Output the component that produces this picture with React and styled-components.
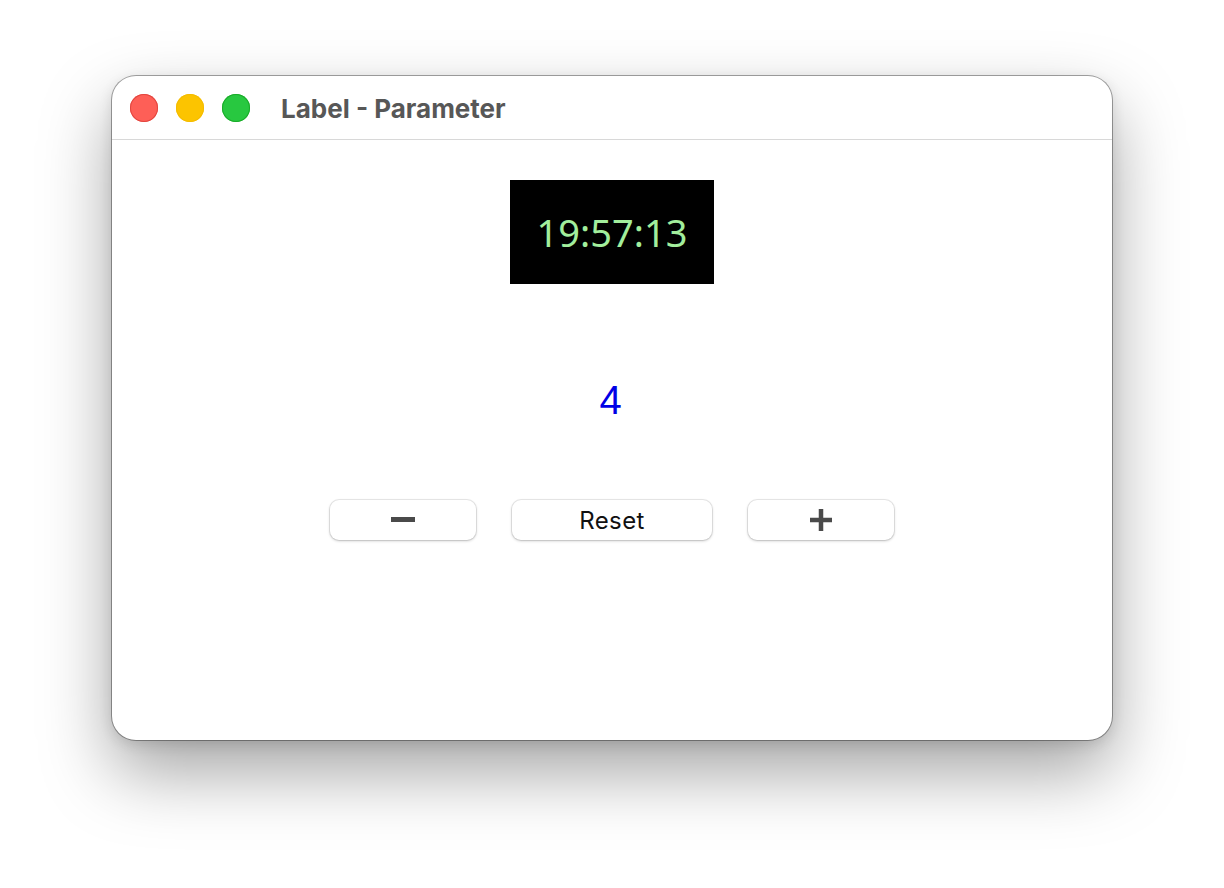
import React from "react";
import styled, { createGlobalStyle } from "styled-components";

const Global = createGlobalStyle`
  html, body { margin: 0; padding: 0; background: #ffffff; }
  body { width: 1224px; height: 888px; overflow: hidden; font-family: "Liberation Sans", Arial, sans-serif; }
`;

const Page = styled.div`
  width: 1224px;
  height: 888px;
  display: flex;
  align-items: flex-start;
  justify-content: center;
  padding-top: 76px;
  box-sizing: border-box;
`;

const Window = styled.div`
  width: 1000px;
  height: 664px;
  background: #fff;
  border-radius: 24px;
  box-shadow: 0 0 0 1px rgba(0, 0, 0, 0.34), 0 32px 70px rgba(0, 0, 0, 0.36), 0 4px 14px rgba(0, 0, 0, 0.12);
  display: flex;
  flex-direction: column;
  overflow: hidden;
`;

const TitleBar = styled.div`
  height: 63px;
  border-bottom: 1px solid #d8d8d8;
  display: flex;
  align-items: center;
  padding-left: 18px;
  flex-shrink: 0;
`;

const Lights = styled.div`
  display: flex;
  gap: 18px;
  margin-right: 31px;
`;

const Light = styled.div`
  width: 28px;
  height: 28px;
  border-radius: 50%;
  background: ${(p) => p.$bg};
  box-shadow: inset 0 0 0 1px ${(p) => p.$edge};
`;

const Title = styled.div`
  font-family: Inter, "Liberation Sans", sans-serif;
  font-weight: 700;
  font-size: 26px;
  color: #575757;
  margin-top: 2px;
`;

const Content = styled.div`
  flex: 1;
  display: flex;
  flex-direction: column;
  align-items: center;
  padding-top: 40px;
`;

const Clock = styled.div`
  width: 204px;
  height: 104px;
  background: #000;
  color: #a2ee9c;
  font-family: "Noto Sans", "Open Sans", sans-serif;
  font-size: 38px;
  display: flex;
  align-items: center;
  justify-content: center;
`;

const Counter = styled.div`
  margin-top: 86px;
  height: 60px;
  display: flex;
  align-items: center;
  justify-content: center;
  color: #0000e6;
  font-family: "Liberation Sans", Arial, sans-serif;
  font-size: 40px;
  padding-right: 3px;
`;

const Buttons = styled.div`
  margin-top: 70px;
  display: flex;
  gap: 36px;
`;

const Button = styled.button`
  width: ${(p) => p.$w}px;
  height: 40px;
  border: none;
  border-radius: 9px;
  background: #fff;
  box-shadow: 0 0 0 1px rgba(0, 0, 0, 0.08), 0 1px 3px rgba(0, 0, 0, 0.22);
  display: flex;
  align-items: center;
  justify-content: center;
  font-family: Inter, "Liberation Sans", sans-serif;
  font-size: 24px;
  letter-spacing: 0.4px;
  color: #111;
  padding: 0;
  cursor: pointer;
`;

export default function App() {
  return (
    <>
      <Global />
      <Page>
        <Window>
          <TitleBar>
            <Lights>
              <Light $bg="#fe5f57" $edge="#e2463f" />
              <Light $bg="#fcc400" $edge="#f4bc00" />
              <Light $bg="#28c840" $edge="#1aab29" />
            </Lights>
            <Title>Label - Parameter</Title>
          </TitleBar>
          <Content>
            <Clock>19:57:13</Clock>
            <Counter>4</Counter>
            <Buttons>
              <Button $w={146} aria-label="minus">
                <svg width="24" height="6" viewBox="0 0 24 6">
                  <rect x="0" y="0" width="24" height="5" fill="#4a4a4a" />
                </svg>
              </Button>
              <Button $w={200}>Reset</Button>
              <Button $w={146} aria-label="plus">
                <svg width="22" height="22" viewBox="0 0 22 22">
                  <rect x="8.75" y="0" width="4.5" height="22" fill="#4a4a4a" />
                  <rect x="0" y="8.75" width="22" height="4.5" fill="#4a4a4a" />
                </svg>
              </Button>
            </Buttons>
          </Content>
        </Window>
      </Page>
    </>
  );
}
